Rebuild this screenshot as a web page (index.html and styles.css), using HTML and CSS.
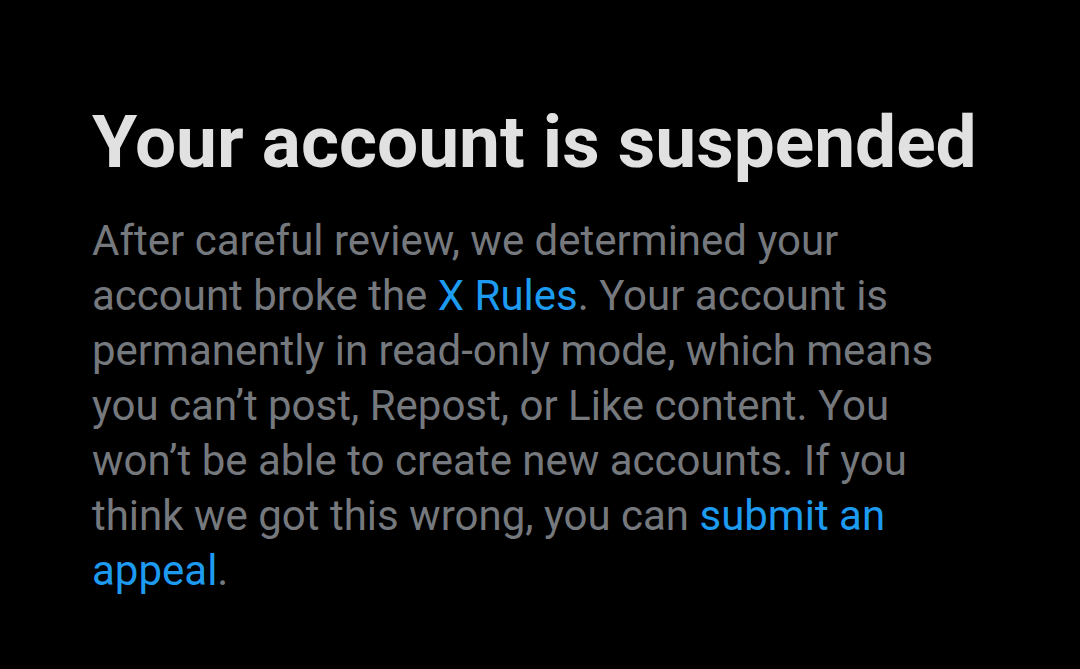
FILE: index.html
```html
<!DOCTYPE html>
<html lang="en">
<head>
<meta charset="utf-8">
<title>Your account is suspended</title>
<link rel="stylesheet" href="styles.css">
</head>
<body>
<main class="notice">
  <h1 class="title">Your account is suspended</h1>
  <p class="body">After careful review, we determined your account broke the <a class="link" href="#">X Rules</a>. Your account is permanently in read-only mode, which means you can’t post, Repost, or Like content. You won’t be able to create new accounts. If you think we got this wrong, you can <a class="link" href="#">submit an appeal</a>.</p>
</main>
</body>
</html>
```
FILE: styles.css
```css
html, body {
  margin: 0;
  padding: 0;
  background: #000;
  height: 100%;
}
body {
  font-family: Roboto, "Noto Sans", sans-serif;
}
.notice {
  padding: 96px 0 0 92px;
  width: 870px;
}
.title {
  margin: 0;
  font-size: 73px;
  font-weight: 700;
  line-height: 92px;
  color: #e1e1e1;
  white-space: nowrap;
}
.body {
  margin: 25px 0 0 0;
  font-size: 42px;
  line-height: 55px;
  color: #75797e;
}
.link {
  color: #1d9bf0;
  text-decoration: none;
}
```
